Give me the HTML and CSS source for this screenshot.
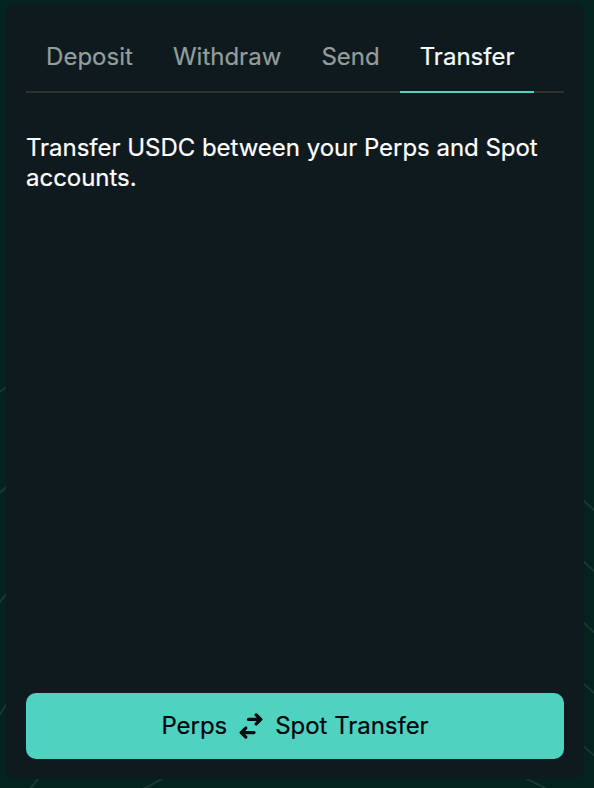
FILE: index.html
```html
<!DOCTYPE html>
<html lang="en">
<head>
    <meta charset="UTF-8">
    <meta name="viewport" content="width=device-width, initial-scale=1.0">
    <title>Transfer</title>
    <link rel="stylesheet" href="styles.css">
</head>
<body>
    <svg class="backdrop" viewBox="0 0 594 788" aria-hidden="true">
        <path d="M-2 393L8 386M-2 494L8 486M-2 604L8 592M-2 717L8 702"/>
        <path d="M582 499L596 512M582 560L596 573M582 621L596 634M582 682L596 695M582 745L596 757"/>
        <path d="M30 789L39 778M143 789L164 778M525 778L547 789"/>
    </svg>
    <div class="panel">
        <div class="tabs">
            <button class="tab">Deposit</button>
            <button class="tab">Withdraw</button>
            <button class="tab">Send</button>
            <button class="tab active">Transfer</button>
        </div>
        <p class="description">Transfer USDC between your Perps and Spot accounts.</p>
        <button class="transfer-button">
            <span>Perps</span>
            <svg class="swap-icon" viewBox="0 0 24 26">
                <path d="M9.5 6.4H21M17.2 1.9L21.8 6.4L17.2 10.9M15 19.6H3M6.8 15.1L2.2 19.6L6.8 24.1"/>
            </svg>
            <span>Spot Transfer</span>
        </button>
    </div>
</body>
</html>
```

FILE: styles.css
```css
*{
    box-sizing: border-box;
}
body{
    height: 788px;
    margin: 0;
    padding: 3px 10px 9px 6px;
    background-color: #02231e;
    font-family: Inter, sans-serif;
    font-size: 24px;
    line-height: 30px;
    -webkit-text-stroke: 0.2px;
    overflow: hidden;
}
button{
    border: none;
    font: inherit;
    cursor: pointer;
}
.backdrop{
    position: absolute;
    top: 0;
    left: 0;
    width: 594px;
    height: 788px;
    fill: none;
    stroke: #1b3730;
    stroke-width: 2;
}
.panel{
    position: relative;
    height: 100%;
    display: flex;
    flex-direction: column;
    padding: 20px;
    background-color: #0f1a1f;
    border-radius: 10px;
}
.tabs{
    height: 70px;
    display: flex;
    background: linear-gradient(#303030, #303030) bottom / 100% 2px no-repeat;
}
.tab{
    padding: 0 20px 0 20.1px;
    background: none;
    border-bottom: 2px solid transparent;
    color: #949e9c;
}
.tab.active{
    padding-right: 19.8px;
    border-bottom-color: #50d2c1;
    color: #f6fefd;
}
.description{
    margin: 40px 0 0;
    color: #ffffff;
    letter-spacing: -0.03px;
}
.transfer-button{
    height: 66px;
    margin-top: auto;
    display: flex;
    align-items: center;
    justify-content: center;
    background-color: #50d2c1;
    border-radius: 10px;
    color: #02060a;
    letter-spacing: -0.03px;
}
.swap-icon{
    width: 24px;
    height: 26px;
    margin: 0 12px;
    fill: none;
    stroke: currentColor;
    stroke-width: 3.3;
    stroke-linecap: round;
    stroke-linejoin: round;
}
```
